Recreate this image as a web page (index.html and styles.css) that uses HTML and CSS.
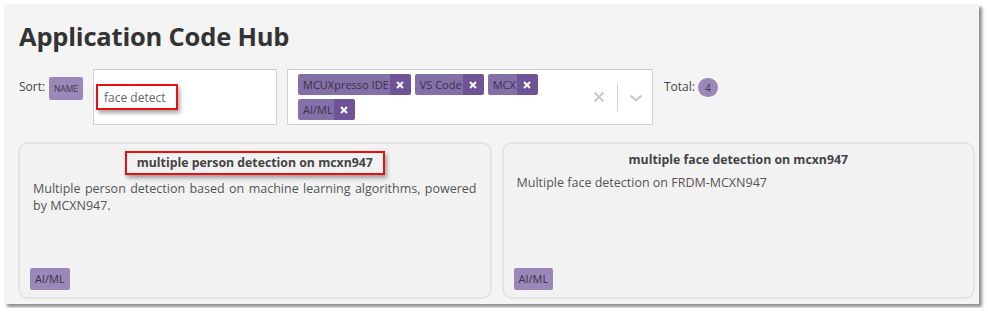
FILE: index.html
```html
<!DOCTYPE html>
<html lang="en">
<head>
    <meta charset="UTF-8">
    <title>Application Code Hub</title>
    <link rel="stylesheet" href="styles.css">
</head>
<body>
    <div class="panel">
        <h1>Application Code Hub</h1>

        <div class="toolbar">
            <span class="label sort">Sort:</span>
            <span class="sort-badge">NAME</span>

            <div class="search">
                <span class="search-text mark">face detect</span>
            </div>

            <div class="multi">
                <div class="tags">
                    <span class="tag"><span class="tag-name">MCUXpresso IDE</span><span class="tag-x"><svg width="8" height="8" viewBox="0 0 8 8"><path d="M1 1 L7 7 M7 1 L1 7" stroke="#fff" stroke-width="2"/></svg></span></span>
                    <span class="tag"><span class="tag-name">VS Code</span><span class="tag-x"><svg width="8" height="8" viewBox="0 0 8 8"><path d="M1 1 L7 7 M7 1 L1 7" stroke="#fff" stroke-width="2"/></svg></span></span>
                    <span class="tag"><span class="tag-name">MCX</span><span class="tag-x"><svg width="8" height="8" viewBox="0 0 8 8"><path d="M1 1 L7 7 M7 1 L1 7" stroke="#fff" stroke-width="2"/></svg></span></span>
                    <span class="tag"><span class="tag-name">AI/ML</span><span class="tag-x"><svg width="8" height="8" viewBox="0 0 8 8"><path d="M1 1 L7 7 M7 1 L1 7" stroke="#fff" stroke-width="2"/></svg></span></span>
                </div>
                <div class="controls">
                    <svg class="clear" width="12" height="12" viewBox="0 0 12 12"><path d="M1.5 1.5 L10.5 10.5 M10.5 1.5 L1.5 10.5" stroke="#c8c8c8" stroke-width="2"/></svg>
                    <span class="sep"></span>
                    <svg class="chev" width="14" height="10" viewBox="0 0 14 10"><path d="M1.5 2.5 L7 7.5 L12.5 2.5" fill="none" stroke="#c8c8c8" stroke-width="2"/></svg>
                </div>
            </div>

            <span class="label total">Total:</span>
            <span class="count">4</span>
        </div>

        <div class="cards">
            <div class="card">
                <h3><span class="mark">multiple person detection on mcxn947</span></h3>
                <p>Multiple person detection based on machine learning algorithms, powered by MCXN947.</p>
                <span class="card-tag">AI/ML</span>
            </div>
            <div class="card">
                <h3>multiple face detection on mcxn947</h3>
                <p>Multiple face detection on FRDM-MCXN947</p>
                <span class="card-tag">AI/ML</span>
            </div>
        </div>
    </div>
</body>
</html>
```

FILE: styles.css
```css
body {
    margin: 0;
    padding: 4px;
    background-color: #fff;
    font-family: 'Open Sans', sans-serif;
    color: #444;
}

.panel {
    width: 975px;
    height: 300px;
    box-sizing: border-box;
    padding: 0 4px 0 14px;
    background-color: #f4f4f4;
    box-shadow: 3px 3px 3px rgba(0, 0, 0, 0.45);
    display: flex;
    flex-direction: column;
}

h1 {
    margin: 14px 0 0 1px;
    font-size: 25.5px;
    line-height: 36px;
    font-weight: 700;
    color: #333;
    letter-spacing: -0.2px;
}

.toolbar {
    display: flex;
    align-items: flex-start;
    margin-top: 15px;
}

.label {
    font-size: 12px;
    color: #444;
    margin-top: 9px;
    margin-left: 1px;
}

.sort {
    width: 30px;
}

.sort-badge {
    margin: 8px 0 0 0;
    width: 34px;
    height: 23px;
    background-color: #9a88b8;
    color: #3c3650;
    font-size: 8.5px;
    display: flex;
    align-items: center;
    justify-content: center;
    border-radius: 2px;
}

.search {
    margin-left: 10px;
    width: 184px;
    height: 56px;
    box-sizing: border-box;
    background-color: #fff;
    border: 1px solid #d0d0d0;
    padding: 14px 0 0 2px;
}

.search-text {
    display: inline-block;
    width: 82px;
    height: 26px;
    box-sizing: border-box;
    padding: 3px 0 0 6px;
    font-size: 12px;
    color: #666;
}

.mark {
    border: 2px solid #e81010;
    box-shadow: 2px 3px 4px rgba(0, 0, 0, 0.35);
}

.multi {
    margin-left: 10px;
    width: 366px;
    height: 56px;
    box-sizing: border-box;
    background-color: #fff;
    border: 1px solid #d0d0d0;
    display: flex;
    padding: 4px 0 0 10px;
}

.tags {
    width: 270px;
    display: flex;
    flex-wrap: wrap;
    gap: 4px;
    align-content: flex-start;
}

.tag {
    display: flex;
    height: 21px;
    border-radius: 2px;
    overflow: hidden;
    font-size: 11px;
}

.tag-name {
    background-color: #8470a8;
    color: #3a3148;
    padding: 0 1px 0 5px;
    line-height: 21px;
}

.tag-x {
    background-color: #6e5496;
    width: 21px;
    display: flex;
    align-items: center;
    justify-content: center;
}

.controls {
    margin-left: 25px;
    display: flex;
    align-items: center;
    height: 46px;
}

.sep {
    width: 1px;
    height: 27px;
    background-color: #d0d0d0;
    margin: 0 11px 0 12px;
}

.chev {
    margin-top: 2px;
}

.total {
    margin-left: 11px;
    margin-top: 9px;
}

.count {
    margin: 9px 0 0 3px;
    width: 20px;
    height: 19px;
    border-radius: 10px;
    background-color: #9a88b8;
    color: #3c3650;
    font-size: 10px;
    display: flex;
    align-items: center;
    justify-content: center;
}

.cards {
    display: flex;
    gap: 10px;
    margin-top: 17px;
}

.card {
    width: 474px;
    height: 157px;
    box-sizing: border-box;
    border: 2px solid #e4e4e4;
    border-radius: 10px;
    background-color: #f2f2f2;
    padding: 7px 13px 7px 13px;
    display: flex;
    flex-direction: column;
}

.card h3 {
    margin: 0;
    text-align: center;
    font-size: 12.3px;
    line-height: 18px;
    color: #444;
}

.card h3 .mark {
    display: inline-block;
    padding: 1px 10px;
}

.card p {
    margin: 5px 0 0 0;
    font-size: 12.5px;
    line-height: 17px;
    color: #555;
    text-align: justify;
}

.card-tag {
    margin-top: auto;
    margin-left: -3px;
    align-self: flex-start;
    background-color: #9a88b8;
    color: #3a3148;
    font-size: 11px;
    height: 22px;
    line-height: 22px;
    padding: 0 5px;
    border-radius: 2px;
}
```
